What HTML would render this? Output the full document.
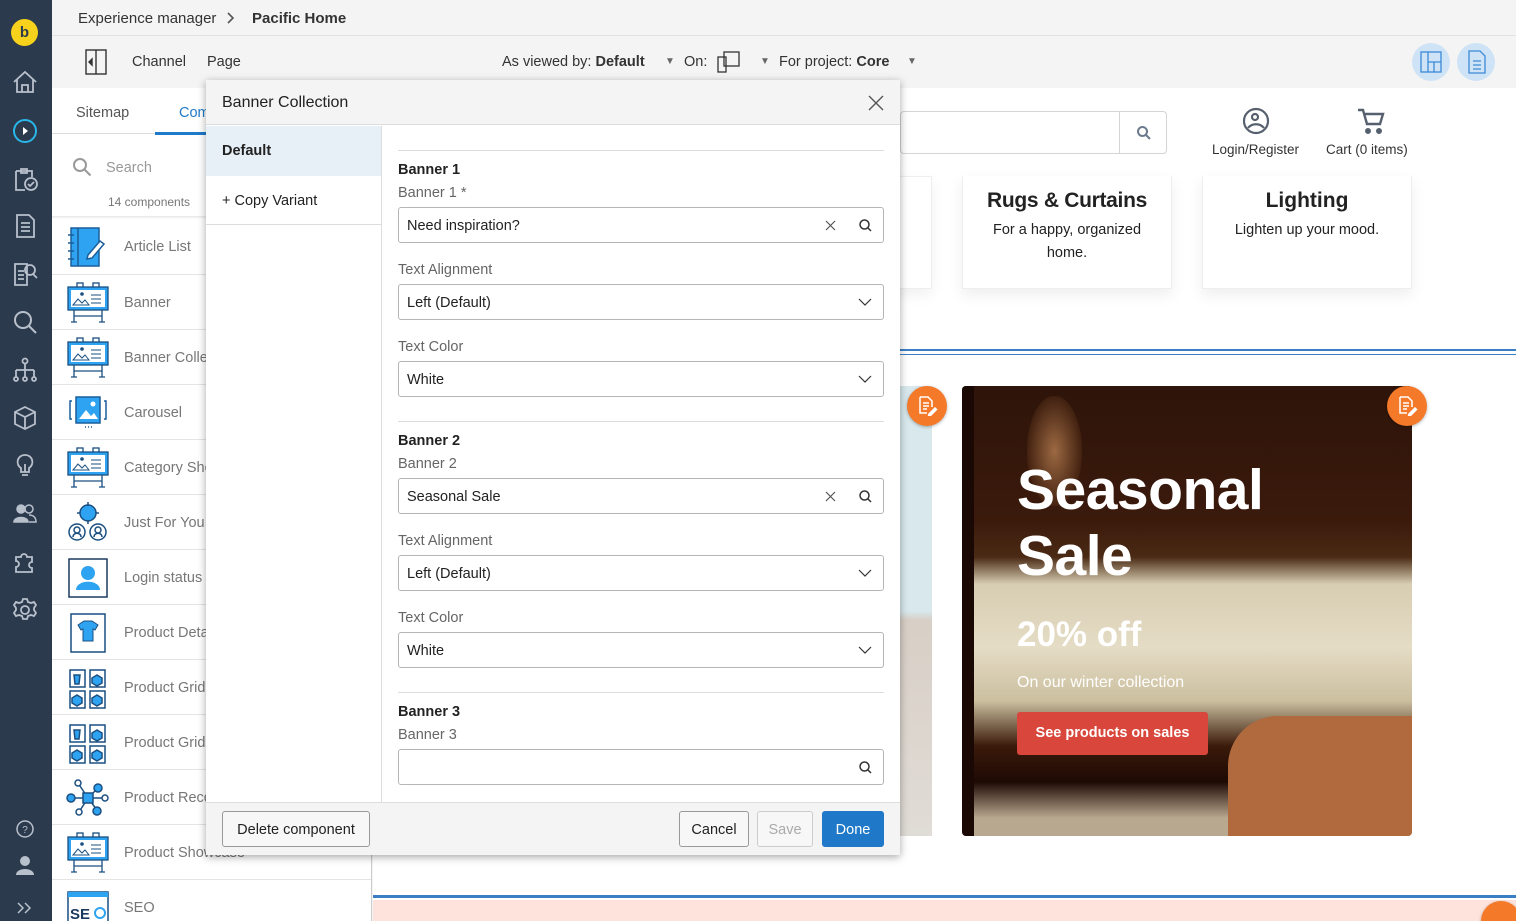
<!DOCTYPE html>
<html><head><meta charset="utf-8"><style>
*{box-sizing:border-box;margin:0;padding:0}
html,body{width:1516px;height:921px;overflow:hidden}
body{font-family:"Liberation Sans",sans-serif;background:#f4f4f4;position:relative;color:#222}
.abs{position:absolute}
#nav{left:0;top:0;width:52px;height:921px;background:#2c3a4d}
#nav svg{position:absolute;left:12px}
.top1{left:52px;top:0;width:1464px;height:36px;background:#f4f4f4;border-bottom:1px solid #e2e2e2;font-size:15px}
.top2{left:52px;top:36px;width:1464px;height:52px;background:#f4f4f4;font-size:14.5px}
#panel{left:52px;top:88px;width:320px;height:833px;background:#fff;border-right:1px solid #ccc;overflow:hidden}
.row{position:absolute;left:0;width:320px;height:55px;border-top:1px solid #e4e4e4}
.row span{position:absolute;left:72px;top:20px;font-size:14.5px;color:#777}
.row svg{position:absolute;left:14px;top:6px}
#canvas{left:373px;top:88px;width:1143px;height:833px;background:#fff;overflow:hidden}
#dlg{left:206px;top:80px;width:694px;height:775px;background:#fff;box-shadow:0 2px 8px rgba(0,0,0,.35)}
.lbl{position:absolute;left:398px;font-size:14.5px;color:#666}
.ttl{position:absolute;left:398px;font-size:14.5px;font-weight:bold;color:#222}
.inp{position:absolute;left:398px;width:486px;height:36px;border:1px solid #b5b5b5;border-radius:3px;font-size:14.5px;padding:10px 8px;color:#222;background:#fff}
.sep{position:absolute;left:398px;width:486px;height:1px;background:#ddd}
.chev{position:absolute;right:11px;top:11px}
.btn{position:absolute;top:811px;height:36px;border:1px solid #999;border-radius:3px;font-size:14.5px;text-align:center;line-height:36px;background:#f7f7f7}
.oc{position:absolute;width:40px;height:40px;border-radius:50%;background:#f47a2a;box-shadow:0 1px 3px rgba(0,0,0,.3)}
.oc svg{position:absolute;left:11px;top:10px}
</style></head><body>

<div id="nav" class="abs">
<div class="abs" style="left:11px;top:19px;width:27px;height:27px;border-radius:50%;background:#f7d21c;color:#2c3a4d;font-weight:bold;font-size:15px;text-align:center;line-height:27px">b</div>
<svg style="top:70px" width="26" height="24" viewBox="0 0 26 24" fill="none" stroke="#b8c0cc" stroke-width="1.8"><path d="M2 12L13 2l11 10M5 9v13h16V9M10 22v-7h6v7"/></svg>
<svg style="top:118px" width="26" height="26" viewBox="0 0 26 26" fill="none" stroke="#29b6e8" stroke-width="2"><circle cx="13" cy="13" r="11"/><path d="M11 9l5 4-5 4z" fill="#fff" stroke="none"/></svg>
<svg style="top:166px" width="26" height="26" viewBox="0 0 26 26" fill="none" stroke="#b8c0cc" stroke-width="1.8"><path d="M4 5h16v6M4 5v19h9M9 3h6v4H9z"/><circle cx="19" cy="18" r="6"/><path d="M16 18l2 2 4-4"/></svg>
<svg style="top:213px" width="26" height="26" viewBox="0 0 26 26" fill="none" stroke="#b8c0cc" stroke-width="1.8"><path d="M5 2h12l5 5v17H5zM9 10h9M9 14h9M9 18h9"/></svg>
<svg style="top:261px" width="26" height="26" viewBox="0 0 26 26" fill="none" stroke="#b8c0cc" stroke-width="1.8"><path d="M3 3h12v21H3zM6 10h6M6 14h6M6 18h6"/><circle cx="18" cy="9" r="5"/><path d="M21 13l4 4"/></svg>
<svg style="top:309px" width="26" height="26" viewBox="0 0 26 26" fill="none" stroke="#b8c0cc" stroke-width="2"><circle cx="11" cy="11" r="8"/><path d="M17 17l7 7"/></svg>
<svg style="top:357px" width="26" height="26" viewBox="0 0 26 26" fill="none" stroke="#b8c0cc" stroke-width="1.8"><circle cx="13" cy="4" r="2.5"/><path d="M13 7v6M4 13h18M4 13v7M13 13v7M22 13v7"/><circle cx="4" cy="22" r="2"/><circle cx="13" cy="22" r="2"/><circle cx="22" cy="22" r="2"/></svg>
<svg style="top:405px" width="26" height="26" viewBox="0 0 26 26" fill="none" stroke="#b8c0cc" stroke-width="1.8"><path d="M13 2l10 5v12l-10 5-10-5V7zM3 7l10 5 10-5M13 12v12"/></svg>
<svg style="top:453px" width="26" height="26" viewBox="0 0 26 26" fill="none" stroke="#b8c0cc" stroke-width="1.8"><path d="M13 2a7 7 0 0 0-4 13v4h8v-4a7 7 0 0 0-4-13zM10 22h6M13 11v8"/></svg>
<svg style="top:501px" width="26" height="26" viewBox="0 0 26 26" fill="#b8c0cc" stroke="#b8c0cc" stroke-width="1.5"><circle cx="9" cy="8" r="4"/><path d="M2 21c0-6 14-6 14 0z"/><circle cx="17" cy="8" r="4" fill="none"/><path d="M17 14c4 0 7 2 7 7h-7" fill="none"/></svg>
<svg style="top:549px" width="26" height="26" viewBox="0 0 26 26" fill="none" stroke="#b8c0cc" stroke-width="1.8"><path d="M4 8h5a3 3 0 1 1 6 0h5v5a3 3 0 1 0 0 6v4H4v-5a3 3 0 1 0 0-6z"/></svg>
<svg style="top:597px" width="26" height="26" viewBox="0 0 26 26" fill="none" stroke="#b8c0cc" stroke-width="1.8"><circle cx="13" cy="13" r="4"/><path d="M11 2h4l1 3 3 1 3-1 2 3-2 3v2l2 3-2 3-3-1-3 1-1 3h-4l-1-3-3-1-3 1-2-3 2-3v-2L2 8l2-3 3 1 3-1z"/></svg>
<svg style="top:818px" width="26" height="22" viewBox="0 0 26 22" fill="none" stroke="#b8c0cc" stroke-width="1.5"><circle cx="13" cy="11" r="8"/><text x="13" y="15" font-size="10" fill="#b8c0cc" stroke="none" text-anchor="middle">?</text></svg>
<svg style="top:855px" width="26" height="22" viewBox="0 0 26 22" fill="#b8c0cc"><circle cx="13" cy="6" r="5"/><path d="M4 20c0-8 18-8 18 0z"/></svg>
<svg style="top:899px" width="26" height="20" viewBox="0 0 26 20" fill="none" stroke="#b8c0cc" stroke-width="1.5"><path d="M6 4l5 5-5 5M13 4l5 5-5 5"/></svg>
</div>

<div class="abs top1"><span class="abs" style="left:26px;top:10px;color:#333">Experience manager</span>
<svg class="abs" style="left:175px;top:12px" width="8" height="12" fill="none" stroke="#555" stroke-width="1.6"><path d="M1 1l5 5-5 5"/></svg>
<span class="abs" style="left:200px;top:10px;font-weight:bold;color:#333">Pacific Home</span></div>
<div class="abs top2">
<svg class="abs" style="left:33px;top:13px" width="22" height="26" viewBox="0 0 22 26" fill="none" stroke="#333" stroke-width="1.4"><rect x="1" y="1" width="20" height="24"/><path d="M11 1v24"/><path d="M7 10l-3 3 3 3z" fill="#333"/></svg>
<span class="abs" style="left:80px;top:18px;color:#333">Channel</span><span class="abs" style="left:155px;top:18px;color:#333">Page</span>
<span class="abs" style="left:450px;top:18px;color:#333">As viewed by: <b>Default</b></span>
<span class="abs" style="left:613px;top:20px;color:#666;font-size:10px">▼</span>
<span class="abs" style="left:632px;top:18px;color:#333">On:</span>
<svg class="abs" style="left:665px;top:15px" width="24" height="22" viewBox="0 0 24 22" fill="none" stroke="#333" stroke-width="1.3"><rect x="7" y="1" width="15" height="14"/><rect x="1" y="6" width="8" height="15"/></svg>
<span class="abs" style="left:708px;top:20px;color:#666;font-size:10px">▼</span>
<span class="abs" style="left:727px;top:18px;color:#333">For project: <b>Core</b></span>
<span class="abs" style="left:855px;top:20px;color:#666;font-size:10px">▼</span>
<div class="abs" style="left:1360px;top:7px;width:38px;height:38px;border-radius:50%;background:#cfe3f7"></div>
<svg class="abs" style="left:1368px;top:15px" width="22" height="22" viewBox="0 0 22 22" fill="none" stroke="#3a8ad6" stroke-width="1.3"><rect x="1" y="1" width="20" height="20"/><path d="M8 1v20M8 11h13M14 11v10"/></svg>
<div class="abs" style="left:1405px;top:7px;width:38px;height:38px;border-radius:50%;background:#cfe3f7"></div>
<svg class="abs" style="left:1416px;top:14px" width="18" height="24" viewBox="0 0 18 24" fill="none" stroke="#3a8ad6" stroke-width="1.3"><path d="M1 1h11l5 5v17H1zM5 11h8M5 15h8M5 19h8"/></svg>
</div>

<div id="panel" class="abs">
<div class="abs" style="left:0;top:0;width:320px;height:46px;border-bottom:1px solid #ddd"></div>
<span class="abs" style="left:24px;top:17px;font-size:14.5px;color:#555">Sitemap</span>
<span class="abs" style="left:127px;top:17px;font-size:14.5px;color:#1f7ac9">Components</span>
<div class="abs" style="left:103px;top:44px;width:110px;height:3px;background:#1f7ac9"></div>
<svg class="abs" style="left:20px;top:69px" width="20" height="20" viewBox="0 0 20 20" fill="none" stroke="#999" stroke-width="2"><circle cx="8" cy="8" r="6"/><path d="M12.5 12.5l6 6"/></svg>
<span class="abs" style="left:54px;top:72px;font-size:14.5px;color:#999">Search</span>
<span class="abs" style="left:56px;top:107px;font-size:12px;color:#777">14 components</span>
<div class="abs" style="left:0;top:128px;width:320px;height:3px;background:linear-gradient(#e6e6e6,#fff)"></div>

<div class="row" style="top:131px;border-top:none"><svg width="44" height="44" viewBox="0 0 44 44"><rect x="5" y="3" width="28" height="38" fill="#2ea3f2" stroke="#1a5e9a" stroke-width="1.5"/><path d="M12 3v38M2 10h6M2 18h6M2 26h6M2 34h6" stroke="#1a5e9a" stroke-width="1.5"/><path d="M22 30l12-14 4 3-12 14-5 1z" fill="#fff" stroke="#1a5e9a" stroke-width="1.5"/></svg><span>Article List</span></div>
<div class="row" style="top:186px"><svg width="44" height="44"><use href="#bn"/></svg><span>Banner</span></div>
<div class="row" style="top:241px"><svg width="44" height="44"><use href="#bn"/></svg><span>Banner Collection</span></div>
<div class="row" style="top:296px"><svg width="44" height="44" viewBox="0 0 44 44"><rect x="10" y="6" width="24" height="26" fill="#2ea3f2" stroke="#1a5e9a" stroke-width="1.5"/><path d="M13 28l7-9 5 6 3-3 4 6z" fill="#fff"/><circle cx="27" cy="13" r="2.5" fill="#fff"/><path d="M6 10h-2v18h2M38 10h2v18h-2" stroke="#1a5e9a" fill="none" stroke-width="1.5"/><path d="M19 36h1M22 36h1M25 36h1" stroke="#1a5e9a" stroke-width="1.5"/></svg><span>Carousel</span></div>
<div class="row" style="top:351px"><svg width="44" height="44"><use href="#bn"/></svg><span>Category Showcase</span></div>
<div class="row" style="top:406px"><svg width="44" height="44" viewBox="0 0 44 44" fill="none" stroke="#1a4f80" stroke-width="1.5"><circle cx="22" cy="12" r="8" fill="#2ea3f2"/><circle cx="11" cy="31" r="8"/><circle cx="32" cy="31" r="8"/><path d="M22 1v4M22 19v4M11 12h3M30 12h3M7 36c0-5 8-5 8 0M28 36c0-5 8-5 8 0"/><circle cx="11" cy="29" r="3"/><circle cx="32" cy="29" r="3"/></svg><span>Just For You</span></div>
<div class="row" style="top:461px"><svg width="44" height="44" viewBox="0 0 44 44"><rect x="3" y="3" width="38" height="38" fill="#fff" stroke="#1a3a5e" stroke-width="1.5"/><circle cx="22" cy="17" r="7" fill="#2ea3f2"/><path d="M10 34c0-11 24-11 24 0z" fill="#2ea3f2"/></svg><span>Login status</span></div>
<div class="row" style="top:516px"><svg width="44" height="44" viewBox="0 0 44 44"><rect x="5" y="3" width="34" height="38" fill="#fff" stroke="#1a4f80" stroke-width="1.5"/><path d="M12 14l6-4h8l6 4-3 5-2-1v12H17V18l-2 1z" fill="#2ea3f2" stroke="#1a4f80"/></svg><span>Product Details</span></div>
<div class="row" style="top:571px"><svg width="44" height="44"><use href="#grid"/></svg><span>Product Grid</span></div>
<div class="row" style="top:626px"><svg width="44" height="44"><use href="#grid"/></svg><span>Product Grid</span></div>
<div class="row" style="top:681px"><svg width="44" height="44" viewBox="0 0 44 44" stroke="#1a4f80" stroke-width="1.5"><path d="M22 22L12 7M22 22l10-10M22 22H4M22 22h17M22 22l-9 14M22 22l9 12"/><circle cx="12" cy="7" r="3" fill="#fff"/><circle cx="32" cy="12" r="4" fill="#2ea3f2"/><circle cx="5" cy="22" r="4" fill="#2ea3f2"/><circle cx="39" cy="22" r="3" fill="#fff"/><circle cx="13" cy="36" r="3" fill="#fff"/><circle cx="31" cy="35" r="4" fill="#2ea3f2"/><rect x="17" y="17" width="10" height="10" fill="#2ea3f2"/></svg><span>Product Recommendations</span></div>
<div class="row" style="top:736px"><svg width="44" height="44"><use href="#bn"/></svg><span>Product Showcase</span></div>
<div class="row" style="top:791px"><svg width="44" height="44" viewBox="0 0 44 44"><rect x="2" y="6" width="40" height="40" fill="#fff" stroke="#1a4f80" stroke-width="1.5"/><rect x="2" y="6" width="40" height="5" fill="#2ea3f2"/><text x="4" y="33" font-size="15" font-weight="bold" fill="#1a3a5e" font-family="Liberation Sans">SE</text><circle cx="34" cy="27" r="5" fill="none" stroke="#2ea3f2" stroke-width="2"/></svg><span>SEO</span></div>
</div>

<svg width="0" height="0" style="position:absolute"><defs>
<g id="bn"><rect x="11" y="2" width="6" height="5" fill="#fff" stroke="#1a4f80" stroke-width="1.3"/><rect x="27" y="2" width="6" height="5" fill="#fff" stroke="#1a4f80" stroke-width="1.3"/><rect x="2" y="6" width="40" height="23" fill="#2ea3f2" stroke="#1a4f80" stroke-width="1.3"/><rect x="5" y="9" width="34" height="17" fill="#fff"/><path d="M7 24l5-6 4 4 3-3 4 5z" fill="none" stroke="#1a4f80"/><circle cx="16" cy="13" r="1.8" fill="#1a4f80"/><path d="M25 14h10M25 18h10M25 22h10" stroke="#1a4f80"/><path d="M8 29v12M36 29v12M8 35h28M5 41h6M33 41h6" stroke="#1a4f80" stroke-width="1.3"/></g>
<g id="grid" fill="#fff" stroke="#1a4f80" stroke-width="1.5"><rect x="4" y="4" width="15" height="17"/><rect x="24" y="4" width="15" height="17"/><rect x="4" y="25" width="15" height="17"/><rect x="24" y="25" width="15" height="17"/><path d="M8 9l6 0-1 9h-4z" fill="#2ea3f2"/><path d="M31 9l5 3v5l-5 3-5-3v-5z" fill="#2ea3f2"/><path d="M11 29l5 3v5l-5 3-5-3v-5z" fill="#2ea3f2"/><path d="M31 29l5 3v5l-5 3-5-3v-5z" fill="#2ea3f2"/></g>
<g id="ed" fill="none" stroke="#fff" stroke-width="1.5"><path d="M2 1h8l4 4v6M2 1v16h7M5 7h6M5 10h6M5 13h4"/><path d="M11 18l6-6 1.5 1.5-6 6-2 .5z" fill="#fff"/></g>
</defs></svg>

<div id="canvas" class="abs">
<div class="abs" style="left:0;top:0;width:1143px;height:263px;background:#fff;border-bottom:2px solid #3a7fc4"></div>
<div class="abs" style="left:527px;top:23px;width:267px;height:43px;border:1px solid #d4d4d4;border-radius:4px"></div>
<div class="abs" style="left:746px;top:23px;width:1px;height:43px;background:#d4d4d4"></div>
<svg class="abs" style="left:763px;top:37px" width="16" height="16" viewBox="0 0 16 16" fill="none" stroke="#6b7a8c" stroke-width="2"><circle cx="6.5" cy="6.5" r="4.5"/><path d="M10 10l4 4"/></svg>
<svg class="abs" style="left:868px;top:18px" width="30" height="30" viewBox="0 0 30 30" fill="none" stroke="#56606e" stroke-width="2.2"><circle cx="15" cy="15" r="12"/><circle cx="14" cy="11" r="3"/><path d="M7 22c4-5 12-5 16 0"/></svg>
<span class="abs" style="left:839px;top:54px;font-size:13.5px;color:#333">Login/Register</span>
<svg class="abs" style="left:983px;top:18px" width="30" height="30" viewBox="0 0 30 30" fill="none" stroke="#56606e" stroke-width="2.4"><path d="M2 4h5l4 14h13l3-10H9"/><circle cx="12" cy="25" r="1.8" fill="#56606e"/><circle cx="23" cy="25" r="1.8" fill="#56606e"/></svg>
<span class="abs" style="left:953px;top:54px;font-size:13.5px;color:#333">Cart (0 items)</span>
<div class="abs" style="left:450px;top:88px;width:109px;height:113px;background:#fff;border:1px solid #eee;box-shadow:0 6px 14px rgba(0,0,0,.06)"></div>
<div class="abs" style="left:589px;top:88px;width:210px;height:113px;background:#fff;border:1px solid #eee;border-top:none;box-shadow:0 6px 14px rgba(0,0,0,.07);text-align:center">
<div style="font-size:21px;font-weight:bold;color:#222;margin-top:13px;letter-spacing:-.3px">Rugs &amp; Curtains</div><div style="font-size:14.5px;line-height:23px;margin-top:6px;color:#222">For a happy, organized<br>home.</div></div>
<div class="abs" style="left:829px;top:88px;width:210px;height:113px;background:#fff;border:1px solid #eee;border-top:none;box-shadow:0 6px 14px rgba(0,0,0,.07);text-align:center">
<div style="font-size:21px;font-weight:bold;color:#222;margin-top:13px">Lighting</div><div style="font-size:14.5px;line-height:23px;margin-top:6px;color:#222">Lighten up your mood.</div></div>
<div class="abs" style="left:0;top:266px;width:1143px;height:1px;background:#3a7fc4"></div>
<div class="abs" style="left:527px;top:298px;width:32px;height:450px;background:linear-gradient(#d8e8ec 0,#d8e8ec 50%,#d8cfc6 52%,#e0dcd6 100%)"></div>
<div class="abs" style="left:589px;top:298px;width:450px;height:450px;border-radius:4px;overflow:hidden;background:linear-gradient(180deg,#2e140a 0%,#3b1a0c 30%,#4a2a14 38%,#d7cdb2 44%,#e5dcc5 58%,#cbbf9f 70%,#3a1a0a 80%,#1e0a04 88%,#b9a890 96%)">
<div class="abs" style="left:0;top:0;width:12px;height:450px;background:#1a0804"></div>
<div class="abs" style="left:266px;top:330px;width:190px;height:130px;border-radius:50px 0 0 0;background:#b06a3e"></div>
<div class="abs" style="left:65px;top:10px;width:55px;height:110px;border-radius:30px;background:radial-gradient(rgba(200,140,90,.7),rgba(90,50,25,.4) 70%,transparent 72%)"></div>
</div>
<div class="abs" style="left:644px;top:369px;font-size:57px;font-weight:bold;color:#fff;line-height:66px;letter-spacing:-.5px">Seasonal<br>Sale</div>
<div class="abs" style="left:644px;top:527px;font-size:35px;font-weight:bold;color:#fff">20% off</div>
<div class="abs" style="left:644px;top:586px;font-size:16px;color:#fff">On our winter collection</div>
<div class="abs" style="left:644px;top:624px;width:191px;height:43px;background:#d9473c;border-radius:3px;color:#fff;font-weight:bold;font-size:14.5px;text-align:center;line-height:43px">See products on sales</div>
<div class="oc" style="left:534px;top:298px"><svg width="20" height="20"><use href="#ed"/></svg></div>
<div class="oc" style="left:1014px;top:298px"><svg width="20" height="20"><use href="#ed"/></svg></div>
<div class="abs" style="left:0;top:807px;width:1143px;height:3px;border-top:2px solid #3a7fc4;border-bottom:1px solid #3a7fc4"></div>
<div class="abs" style="left:0;top:812px;width:1143px;height:21px;background:#fde3db"></div>
<div class="oc" style="left:1108px;top:813px"></div>
</div>

<div id="dlg" class="abs">
<div class="abs" style="left:0;top:0;width:694px;height:45px;background:#f4f4f4;border-bottom:1px solid #ddd"></div>
<span class="abs" style="left:16px;top:14px;font-size:16px;color:#222">Banner Collection</span>
<svg class="abs" style="left:662px;top:15px" width="16" height="16" viewBox="0 0 16 16" stroke="#555" stroke-width="1.4"><path d="M1 1l14 14M15 1L1 15"/></svg>
<div class="abs" style="left:0;top:46px;width:175px;height:50px;background:#e7eff7"></div>
<span class="abs" style="left:16px;top:63px;font-size:14.5px;font-weight:bold;color:#222">Default</span>
<span class="abs" style="left:16px;top:113px;font-size:14.5px;color:#222">+ Copy Variant</span>
<div class="abs" style="left:0;top:144px;width:175px;height:1px;background:#ddd"></div>
<div class="abs" style="left:175px;top:46px;width:1px;height:676px;background:#ddd"></div>
<div class="abs" style="left:0;top:722px;width:694px;height:53px;background:#f4f4f4;border-top:1px solid #ddd"></div>
</div>

<div class="sep" style="top:150px"></div>
<div class="ttl" style="top:162px">Banner 1</div><div class="lbl" style="top:185px">Banner 1 *</div>
<div class="inp" style="top:207px">Need inspiration?<svg class="chev" style="right:47px;top:12px" width="11" height="11" stroke="#555" stroke-width="1.2"><path d="M1 1l9 9M10 1l-9 9"/></svg><svg class="chev" width="13" height="13" fill="none" stroke="#333" stroke-width="1.5"><circle cx="5.5" cy="5.5" r="4.5"/><path d="M9 9l3 3"/></svg></div>
<div class="lbl" style="top:262px">Text Alignment</div>
<div class="inp" style="top:284px">Left (Default)<svg class="chev" style="top:13px" width="14" height="9" fill="none" stroke="#333" stroke-width="1.2"><path d="M1 1l6 6 6-6"/></svg></div>
<div class="lbl" style="top:339px">Text Color</div>
<div class="inp" style="top:361px">White<svg class="chev" style="top:13px" width="14" height="9" fill="none" stroke="#333" stroke-width="1.2"><path d="M1 1l6 6 6-6"/></svg></div>
<div class="sep" style="top:421px"></div>
<div class="ttl" style="top:433px">Banner 2</div><div class="lbl" style="top:456px">Banner 2</div>
<div class="inp" style="top:478px">Seasonal Sale<svg class="chev" style="right:47px;top:12px" width="11" height="11" stroke="#555" stroke-width="1.2"><path d="M1 1l9 9M10 1l-9 9"/></svg><svg class="chev" width="13" height="13" fill="none" stroke="#333" stroke-width="1.5"><circle cx="5.5" cy="5.5" r="4.5"/><path d="M9 9l3 3"/></svg></div>
<div class="lbl" style="top:533px">Text Alignment</div>
<div class="inp" style="top:555px">Left (Default)<svg class="chev" style="top:13px" width="14" height="9" fill="none" stroke="#333" stroke-width="1.2"><path d="M1 1l6 6 6-6"/></svg></div>
<div class="lbl" style="top:610px">Text Color</div>
<div class="inp" style="top:632px">White<svg class="chev" style="top:13px" width="14" height="9" fill="none" stroke="#333" stroke-width="1.2"><path d="M1 1l6 6 6-6"/></svg></div>
<div class="sep" style="top:692px"></div>
<div class="ttl" style="top:704px">Banner 3</div><div class="lbl" style="top:727px">Banner 3</div>
<div class="inp" style="top:749px"><svg class="chev" width="13" height="13" fill="none" stroke="#333" stroke-width="1.5"><circle cx="5.5" cy="5.5" r="4.5"/><path d="M9 9l3 3"/></svg></div>

<div class="btn" style="left:222px;width:148px;color:#222">Delete component</div>
<div class="btn" style="left:679px;width:70px;color:#222">Cancel</div>
<div class="btn" style="left:757px;width:56px;color:#aaa;border-color:#ccc">Save</div>
<div class="btn" style="left:822px;width:62px;color:#fff;background:#1f78c8;border-color:#1f78c8">Done</div>
</body></html>
